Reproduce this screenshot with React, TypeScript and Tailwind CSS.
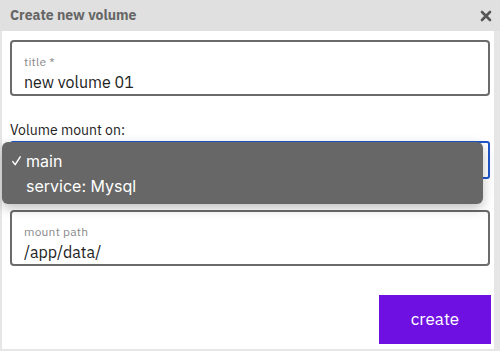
import React from 'react';

const font = { fontFamily: '"IBM Plex Sans", "Noto Sans", "Open Sans", sans-serif' };

const Field = ({ label, value }: { label: string; value: string }) => (
  <div className="h-[56px] w-[480px] rounded-[4px] border-2 border-[#6b6b6b] bg-white px-[12px] pt-[13px]">
    <div className="text-[12px] leading-[14px] tracking-[0.2px] text-[#8a8a8a]">{label}</div>
    <div className="mt-[3px] text-[16px] leading-[20px] text-[#222]">{value}</div>
  </div>
);

export default function App() {
  return (
    <div className="relative h-[351px] w-[500px] overflow-hidden bg-[#e6e6e6]" style={font}>
      <div className="flex h-[31px] items-center justify-between bg-[#e0e0e0] pl-[10px] pr-[8px]">
        <span className="text-[14px] font-bold text-[#666]">Create new volume</span>
        <svg width="12" height="12" viewBox="0 0 12 12">
          <path d="M2 2 L10 10 M10 2 L2 10" stroke="#555" strokeWidth="2.6" strokeLinecap="round" />
        </svg>
      </div>
      <div className="ml-[2px] h-[318px] w-[492px] bg-white pl-[8px] pt-[9px]">
        <Field label="title *" value="new volume 01" />
        <div className="mt-[26px] text-[14px] leading-[17px] text-[#222]">Volume mount on:</div>
        <div className="mt-[2px] h-[38px] w-[480px] rounded-[3px] border-2 border-[#1f55c9]" />
        <div className="mt-[31px]">
          <Field label="mount path" value="/app/data/" />
        </div>
        <div className="mt-[29px] flex justify-end pr-[3px]">
          <button className="h-[49px] w-[112px] bg-[#6f10e2] text-[17px] text-white">create</button>
        </div>
      </div>
      <div className="absolute left-[2px] top-[142px] h-[62px] w-[481px] rounded-[6px] bg-[#666766] pt-[6px] shadow-[0_4px_12px_rgba(0,0,0,0.25)]" style={{ fontFamily: 'Inter, "Noto Sans", sans-serif' }}>
        <div className="flex h-[25px] items-center text-[16px] text-white">
          <span className="flex w-[24px] justify-end pr-[5px]">
            <svg width="9" height="10" viewBox="0 0 9 10">
              <path d="M0.8 5.6 L3.2 8.6 L8.2 0.8" fill="none" stroke="#fff" strokeWidth="1.5" strokeLinecap="round" strokeLinejoin="round" />
            </svg>
          </span>
          <span>main</span>
        </div>
        <div className="flex h-[25px] items-center pl-[24px] text-[16px] text-white">service: Mysql</div>
      </div>
    </div>
  );
}
